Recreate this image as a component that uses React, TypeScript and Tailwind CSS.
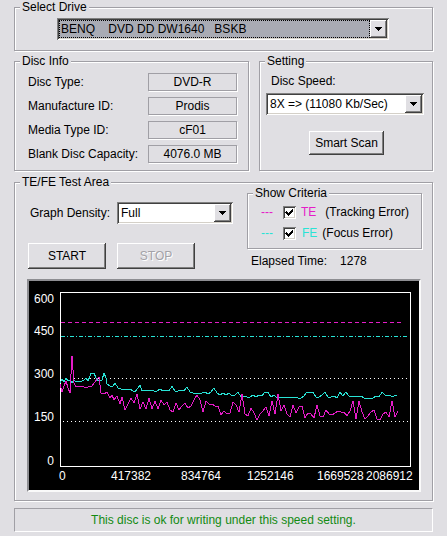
import type { ReactNode } from 'react'

const MAG = '#e51cc8'
const CYAN = '#29e3d5'

function rnd(i: number) {
  const s = Math.sin(i * 127.1 + 311.7) * 43758.5453
  return s - Math.floor(s)
}

// cyan (FE) trace, page coordinates
const cyanKeys: [number, number][] = [
  [60, 383], [62, 379], [64, 382], [66, 378], [68, 381], [70, 380], [72, 383], [74, 380],
  [76, 382], [78, 381], [80, 382], [82, 381], [84, 380], [86, 378], [88, 381], [90, 376],
  [91, 373], [94, 373], [96, 378], [98, 381], [100, 380], [102, 380], [104, 373], [106, 378],
  [107, 384], [110, 386], [113, 386], [115, 383], [118, 388], [121, 389], [126, 389],
  [130, 389], [133, 391], [135, 392], [138, 388], [140, 385], [142, 391], [145, 390],
]

function cyanPoints() {
  const pts = [...cyanKeys]
  for (let x = 148; x <= 399; x += 3) {
    const base = x < 232 ? 390 + (x - 148) * 0.05 : 396.5
    let y = base + (rnd(x) - 0.5) * 3
    if (rnd(x + 7) > 0.86) y = base - 5
    pts.push([x, Math.round(y)])
  }
  return pts.map(([x, y]) => `${x},${y}`).join(' ')
}

// magenta (TE) trace
const magKeys: [number, number][] = [
  [60, 384], [62, 392], [64, 386], [66, 381], [68, 388], [70, 393], [72, 356], [74, 383],
  [76, 387], [80, 386], [84, 387], [88, 387], [92, 386], [95, 382], [97, 379], [99, 377],
  [100, 385], [101, 393], [104, 394], [107, 392], [110, 398], [112, 395], [114, 400],
  [117, 396], [120, 404], [122, 397], [125, 410], [128, 404], [131, 398], [134, 403], [137, 394],
]

function magPoints() {
  const pts = [...magKeys]
  for (let x = 140; x <= 399; x += 3) {
    const base = x < 238 ? 404 + (x - 140) * 0.05 : 413
    const amp = x < 238 ? 14 : 16
    let y = base + (rnd(x * 3 + 1) - 0.5) * amp
    if (rnd(x + 11) > 0.94) y = base - 12
    if (x === 242 || x === 278) y = 394
    pts.push([x, Math.min(422, Math.round(y))])
  }
  return pts.map(([x, y]) => `${x},${y}`).join(' ')
}

const sunken =
  'shadow-[inset_1px_1px_0_#808080,inset_-1px_-1px_0_#fff,inset_2px_2px_0_#404040,inset_-2px_-2px_0_#d4d0c8]'

function Group({ title, className, children }: { title: string; className: string; children?: ReactNode }) {
  return (
    <div className={`relative border border-[#a09fa5] shadow-[inset_1px_1px_0_#fff,1px_1px_0_#fff] ${className}`}>
      <span className="absolute left-[5px] top-[-8px] px-[2px] leading-[14px] bg-[#e0dfe3] text-black">{title}</span>
      {children}
    </div>
  )
}

function Arrow() {
  return (
    <div className="absolute right-[2px] top-[2px] w-[17px] h-[18px] bg-[#e0dfe3] flex items-center justify-center shadow-[inset_-1px_-1px_0_#404040,inset_1px_1px_0_#fff,inset_-2px_-2px_0_#808080]">
      <svg width="7" height="4" viewBox="0 0 7 4" shapeRendering="crispEdges">
        <polygon points="0,0 7,0 3.5,4" fill="#000" />
      </svg>
    </div>
  )
}

function Combo({ className, children }: { className: string; children: ReactNode }) {
  return (
    <div className={`relative h-[22px] ${sunken} ${className}`}>
      <div className="pl-[4px] leading-[22px] whitespace-pre">{children}</div>
      <Arrow />
    </div>
  )
}

function Button({ label, disabled, className }: { label: string; disabled?: boolean; className: string }) {
  return (
    <div
      className={`flex items-center justify-center bg-[#e0dfe3] shadow-[inset_-1px_-1px_0_#404040,inset_1px_1px_0_#fff,inset_-2px_-2px_0_#808080] ${
        disabled ? 'text-[#a3a2a7] [text-shadow:1px_1px_0_#fff]' : 'text-black'
      } ${className}`}
    >
      {label}
    </div>
  )
}

function Check() {
  return (
    <div className={`w-[13px] h-[13px] bg-white flex items-center justify-center ${sunken}`}>
      <svg width="9" height="9" viewBox="0 0 9 9" shapeRendering="crispEdges">
        <path d="M1 3h1v1h1v1h1v-1h1v-1h1v-1h1v-1h1v3h-1v1h-1v1h-1v1h-1v1h-1v-1h-1v-1h-1v-1h-1z" fill="#000" />
      </svg>
    </div>
  )
}

function InfoRow({ label, value }: { label: string; value: string }) {
  return (
    <div className="flex items-center h-[18px]">
      <span className="w-[120px]">{label}</span>
      <div className="w-[89px] h-[18px] border border-[#a09fa5] shadow-[1px_1px_0_#fff] text-center leading-[16px]">
        {value}
      </div>
    </div>
  )
}

function Chart() {
  const yLabels: [string, number][] = [['600', 303], ['450', 335], ['300', 378], ['150', 421], ['0', 465]]
  const xLabels: [string, number][] = [
    ['0', 59], ['417382', 111], ['834764', 181], ['1252146', 247], ['1669528', 317], ['2086912', 366],
  ]
  return (
    <div className="ml-[12px] mt-[10px] w-[394px] h-[213px] border-2 border-t-[#8e8e92] border-l-[#8e8e92] border-b-[#fafafa] border-r-[#fafafa] bg-black">
      <svg width="390" height="209" viewBox="29 281 390 209" className="block">
        <rect x="60.5" y="292.5" width="350" height="174" fill="none" stroke="#fff" />
        <line x1="61" y1="322.5" x2="403" y2="322.5" stroke={MAG} strokeDasharray="4 3" shapeRendering="crispEdges" />
        <line x1="61" y1="336.5" x2="408" y2="336.5" stroke={CYAN} strokeDasharray="4 2 1 2" shapeRendering="crispEdges" />
        <line x1="66" y1="378.5" x2="408" y2="378.5" stroke="#fff" strokeDasharray="1 3" shapeRendering="crispEdges" />
        <line x1="63" y1="421.5" x2="408" y2="421.5" stroke="#fff" strokeDasharray="1 3" shapeRendering="crispEdges" />
        <polyline points={cyanPoints()} fill="none" stroke={CYAN} strokeWidth="1" shapeRendering="crispEdges" />
        <polyline points={magPoints()} fill="none" stroke={MAG} strokeWidth="1" shapeRendering="crispEdges" />
        {yLabels.map(([t, y]) => (
          <text key={t} x="54" y={y} textAnchor="end" fill="#fff" fontSize="12" fontFamily="Liberation Sans, Arial, sans-serif">
            {t}
          </text>
        ))}
        {xLabels.map(([t, x]) => (
          <text key={t} x={x} y="480" fill="#fff" fontSize="12" fontFamily="Liberation Sans, Arial, sans-serif">
            {t}
          </text>
        ))}
      </svg>
    </div>
  )
}

export default function App() {
  return (
    <div className="w-[447px] h-[536px] overflow-hidden bg-[#e0dfe3] px-[14px] pt-[7px] text-[12px] leading-[14px] text-black font-[family-name:Liberation_Sans,Arial,sans-serif]">
      <Group title="Select Drive" className="h-[44px]">
        <div className="pl-[42px] pt-[10px]">
          <Combo className="w-[332px] bg-[#a9abb4]">
            <div className="absolute left-[2px] top-[2px] w-[311px] h-[18px] border border-dotted border-black" />
            BENQ    DVD DD DW1640   BSKB
          </Combo>
        </div>
      </Group>

      <div className="flex gap-[10px] mt-[10px]">
        <Group title="Disc Info" className="w-[235px] h-[110px]">
          <div className="pl-[13px] pt-[11px] flex flex-col gap-[6px]">
            <InfoRow label="Disc Type:" value="DVD-R" />
            <InfoRow label="Manufacture ID:" value="Prodis" />
            <InfoRow label="Media Type ID:" value="cF01" />
            <InfoRow label="Blank Disc Capacity:" value="4076.0 MB" />
          </div>
        </Group>
        <Group title="Setting" className="w-[174px] h-[110px]">
          <div className="pt-[12px] pl-[11px]">Disc Speed:</div>
          <div className="pl-[6px] mt-[5px]">
            <Combo className="w-[158px] bg-white">8X =&gt; (11080 Kb/Sec)</Combo>
          </div>
          <div className="pl-[49px] mt-[16px]">
            <Button label="Smart Scan" className="w-[75px] h-[24px]" />
          </div>
        </Group>
      </div>

      <Group title="TE/FE Test Area" className="mt-[11px] h-[319px]">
        <div className="flex h-[86px]">
          <div className="w-[232px] pl-[13px] pt-[19px]">
            <div className="flex items-center h-[22px]">
              <span className="ml-[2px] w-[87px]">Graph Density:</span>
              <Combo className="w-[116px] bg-white">Full</Combo>
            </div>
            <div className="flex gap-[11px] mt-[19px]">
              <Button label="START" className="w-[78px] h-[26px]" />
              <Button label="STOP" disabled className="w-[78px] h-[26px]" />
            </div>
          </div>
          <div className="pt-[10px]">
            <Group title="Show Criteria" className="w-[175px] h-[56px]">
              <div className="pl-[13px] pt-[9px] flex flex-col gap-[3px]">
                <div className="flex items-center h-[18px]">
                  <span className="w-[22px] text-[#e51cc8]">---</span>
                  <Check />
                  <span className="ml-[5px] text-[#e51cc8]">TE</span>
                  <span className="ml-[9px]">(Tracking Error)</span>
                </div>
                <div className="flex items-center h-[18px]">
                  <span className="w-[22px] text-[#29e3d5]">---</span>
                  <Check />
                  <span className="ml-[6px] text-[#29e3d5]">FE</span>
                  <span className="ml-[5px]">(Focus Error)</span>
                </div>
              </div>
            </Group>
            <div className="mt-[5px] pl-[4px] flex">
              <span>Elapsed Time:</span>
              <span className="ml-[13px]">1278</span>
            </div>
          </div>
        </div>
        <Chart />
      </Group>

      <div className="mt-[7px] h-[24px] border border-[#a09fa5] border-r-white border-b-white text-center leading-[22px] text-[#128a12]">
        This disc is ok for writing under this speed setting.
      </div>
    </div>
  )
}
